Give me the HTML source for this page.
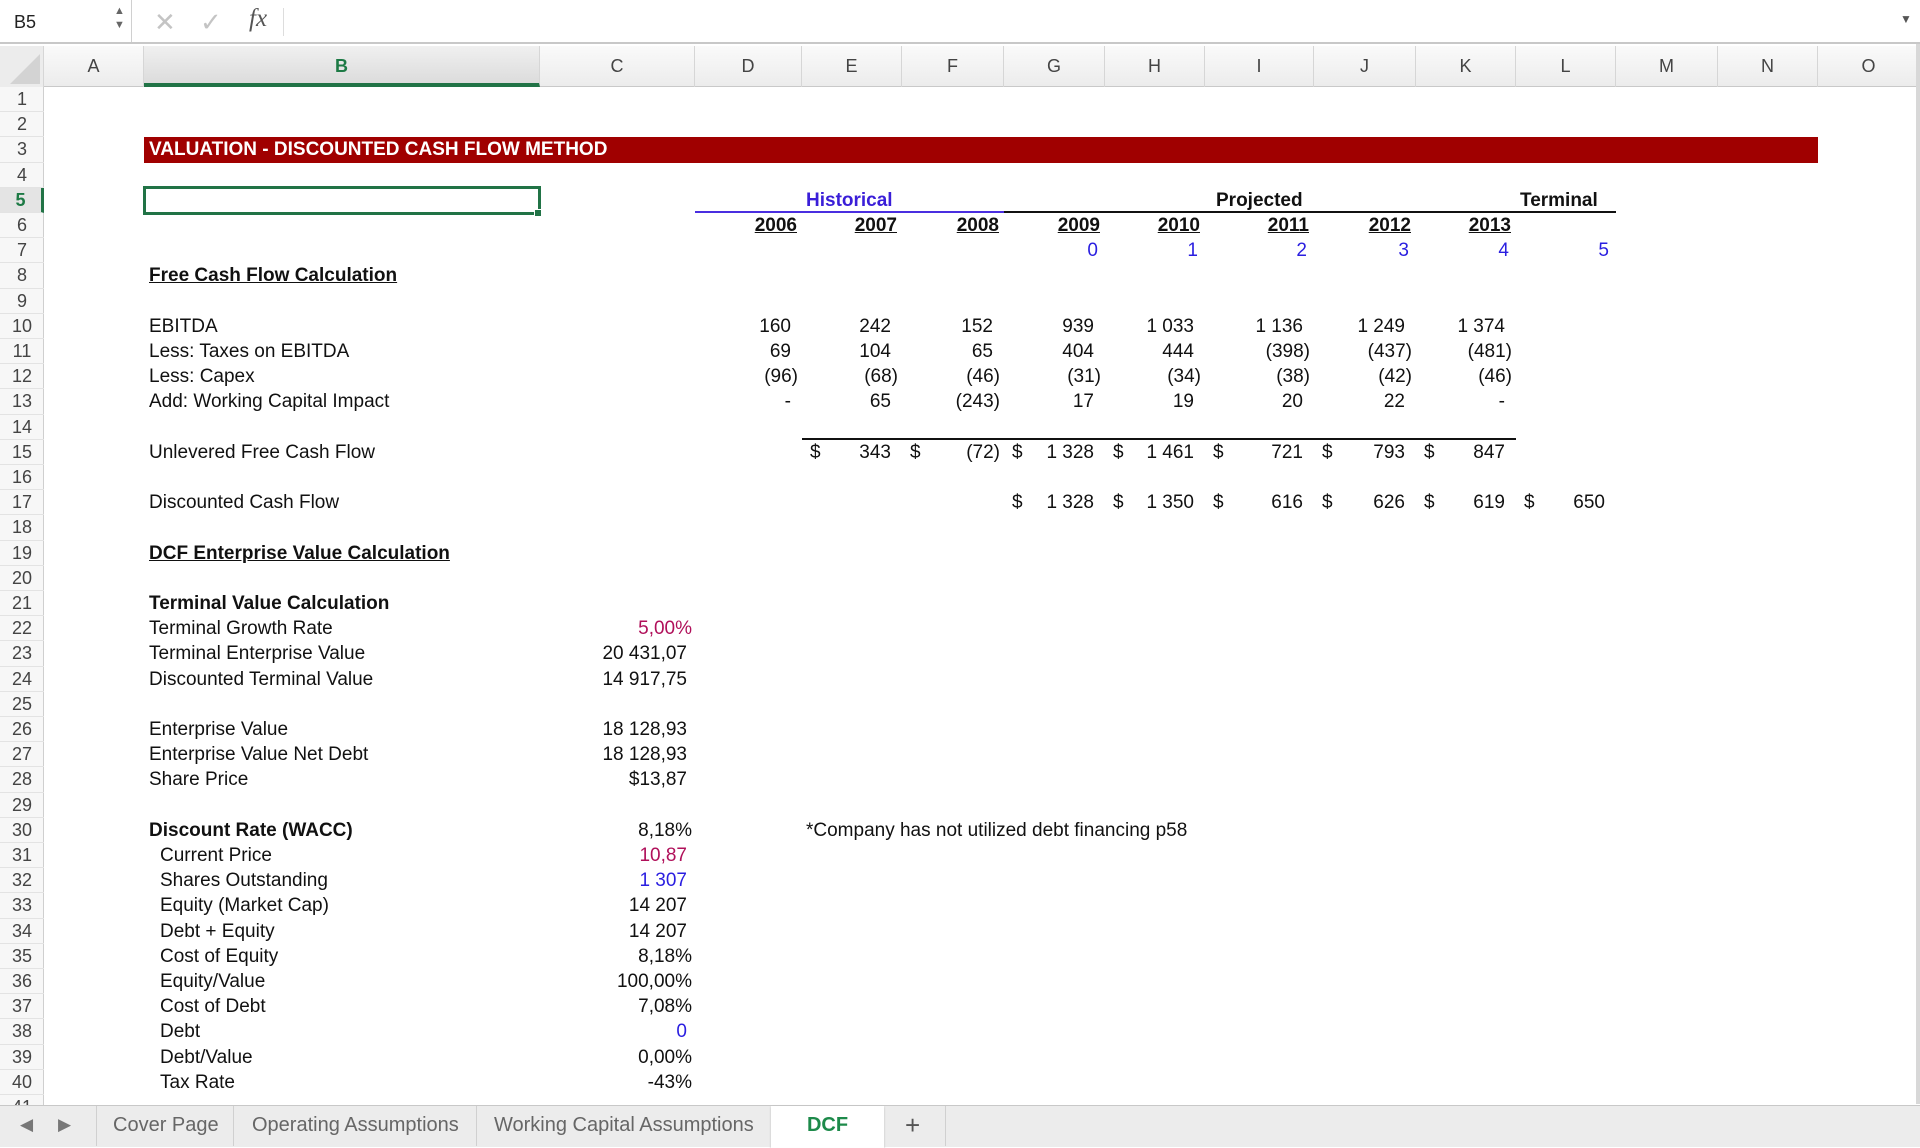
<!DOCTYPE html>
<html><head><meta charset="utf-8"><style>
*{margin:0;padding:0;box-sizing:border-box}
body{width:1920px;height:1147px;overflow:hidden;background:#fff;font-family:"Liberation Sans",Arial,sans-serif;font-size:19px;color:#111;position:relative}
.fb{position:absolute;left:0;top:0;width:1920px;height:44px;background:#fff;border-bottom:2px solid #c8c8c8}
.ch{position:absolute;left:0;top:46px;width:1920px;height:41px;background:linear-gradient(#fafafa,#ececec);border-bottom:1px solid #c9c9c9}
.ch div{position:absolute;top:0;height:41px;line-height:41px;text-align:center;border-right:1px solid #d6d6d6;color:#444;font-size:18px}
.rh{position:absolute;left:0;top:87px;width:44px;height:1020px;background:#f7f7f7;border-right:1px solid #cfcfcf}
.rh div{position:absolute;left:0;width:44px;height:25.2px;line-height:25px;text-align:center;border-bottom:1px solid #e3e3e3;color:#444;font-size:18px}
.r{position:absolute;left:0;width:1920px;height:25.2px}
.r div{position:absolute;top:0;height:25.2px;line-height:25px;white-space:nowrap}
.b{left:149px}.bi{left:160px}
.c{left:540px;width:155px;text-align:right;padding-right:3px}
.D{left:695px;width:107px}.E{left:802px;width:100px}.F{left:902px;width:102px}.G{left:1004px;width:101px}.H{left:1105px;width:100px}.I{left:1205px;width:109px}.J{left:1314px;width:102px}.K{left:1416px;width:100px}.L{left:1516px;width:100px}
.n{text-align:right;padding-right:11px}.p{text-align:right;padding-right:4px}
.y{text-align:right;padding-right:5px;font-weight:bold;text-decoration:underline}
.z{text-align:right;padding-right:7px;color:#2a1ee0}
.dl{text-align:left;padding-left:8px}
.bold{font-weight:bold}.u{text-decoration:underline}
.red{color:#b0105a}.blue{color:#2a1ee0}
.tabs{position:absolute;left:0;top:1105px;width:1920px;height:42px;background:#ececec;border-top:1px solid #c8c8c8}
.tabs div{position:absolute;top:0;height:40px;line-height:38px;font-size:20px;color:#666}
.sep{width:1px;background:#d0d0d0;height:40px!important}
</style></head><body>
<div class="fb">
 <div style="position:absolute;left:0;top:0;width:132px;height:42px;border-right:1px solid #d0d0d0"></div>
 <div style="position:absolute;left:14px;top:12px;font-size:18px;color:#222">B5</div>
 <div style="position:absolute;left:114px;top:4px;font-size:11px;color:#666;line-height:14px">▲<br>▼</div>
 <div style="position:absolute;left:154px;top:7px;font-size:26px;color:#c4c4c4">✕</div>
 <div style="position:absolute;left:200px;top:7px;font-size:26px;color:#c4c4c4">✓</div>
 <div style="position:absolute;left:249px;top:5px;font-size:25px;font-style:italic;font-family:'Liberation Serif',serif;color:#555">fx</div>
 <div style="position:absolute;left:283px;top:8px;width:1px;height:28px;background:#ddd"></div>
 <div style="position:absolute;left:1900px;top:12px;font-size:12px;color:#555">▼</div>
</div>
<div class="ch">
 <div style="left:0;width:44px;background:#ececec"><span style="position:absolute;left:10px;top:8px;width:0;height:0;border-left:30px solid transparent;border-bottom:30px solid #d3d3d3"></span></div>
 <div style="left:44px;width:100px">A</div>
 <div style="left:144px;width:396px;color:#1d7a45;font-weight:bold;background:linear-gradient(#f0f0f0,#dcdcdc);border-bottom:4px solid #217346">B</div>
 <div style="left:540px;width:155px">C</div>
 <div style="left:695px;width:107px">D</div>
 <div style="left:802px;width:100px">E</div>
 <div style="left:902px;width:102px">F</div>
 <div style="left:1004px;width:101px">G</div>
 <div style="left:1105px;width:100px">H</div>
 <div style="left:1205px;width:109px">I</div>
 <div style="left:1314px;width:102px">J</div>
 <div style="left:1416px;width:100px">K</div>
 <div style="left:1516px;width:100px">L</div>
 <div style="left:1616px;width:102px">M</div>
 <div style="left:1718px;width:100px">N</div>
 <div style="left:1818px;width:102px">O</div>
</div>
<div class="rh">
<div style="top:0">1</div><div style="top:25.2px">2</div><div style="top:50.4px">3</div><div style="top:75.6px">4</div><div style="top:100.8px;color:#1d7a45;font-weight:bold;background:#e4e4e4;border-right:3px solid #217346">5</div><div style="top:126px">6</div><div style="top:151.2px">7</div><div style="top:176.4px">8</div><div style="top:201.6px">9</div><div style="top:226.8px">10</div><div style="top:252px">11</div><div style="top:277.2px">12</div><div style="top:302.4px">13</div><div style="top:327.6px">14</div><div style="top:352.8px">15</div><div style="top:378px">16</div><div style="top:403.2px">17</div><div style="top:428.4px">18</div><div style="top:453.6px">19</div><div style="top:478.8px">20</div><div style="top:504px">21</div><div style="top:529.2px">22</div><div style="top:554.4px">23</div><div style="top:579.6px">24</div><div style="top:604.8px">25</div><div style="top:630px">26</div><div style="top:655.2px">27</div><div style="top:680.4px">28</div><div style="top:705.6px">29</div><div style="top:730.8px">30</div><div style="top:756px">31</div><div style="top:781.2px">32</div><div style="top:806.4px">33</div><div style="top:831.6px">34</div><div style="top:856.8px">35</div><div style="top:882px">36</div><div style="top:907.2px">37</div><div style="top:932.4px">38</div><div style="top:957.6px">39</div><div style="top:982.8px">40</div><div style="top:1008px">41</div>
</div>

<div style="position:absolute;left:144px;top:137px;width:1674px;height:26px;background:#a00000"></div>
<div style="position:absolute;left:149px;top:137px;line-height:26px;color:#fff;font-weight:bold;font-size:19px">VALUATION - DISCOUNTED CASH FLOW METHOD</div>
<div style="position:absolute;left:143px;top:186px;width:398px;height:29px;border:3px solid #217346"></div>
<div style="position:absolute;left:534px;top:209px;width:8px;height:8px;background:#217346;border:1px solid #fff"></div>

<div style="position:absolute;left:695px;top:211px;width:309px;height:2px;background:#4a2ee0"></div>
<div style="position:absolute;left:1004px;top:211px;width:612px;height:2px;background:#111"></div>
<div style="position:absolute;left:802px;top:438px;width:714px;height:2px;background:#111"></div>

<div class="r" style="top:187.8px"><div class="bold" style="left:806px;color:#3a1ed8">Historical</div><div class="bold" style="left:1216px">Projected</div><div class="bold" style="left:1520px">Terminal</div></div>
<div class="r" style="top:213px"><div class="D y">2006</div><div class="E y">2007</div><div class="F y">2008</div><div class="G y">2009</div><div class="H y">2010</div><div class="I y">2011</div><div class="J y">2012</div><div class="K y">2013</div></div>
<div class="r" style="top:238.2px"><div class="G z">0</div><div class="H z">1</div><div class="I z">2</div><div class="J z">3</div><div class="K z">4</div><div class="L z">5</div></div>
<div class="r" style="top:263.4px"><div class="b bold u">Free Cash Flow Calculation</div></div>
<div class="r" style="top:313.8px"><div class="b">EBITDA</div><div class="D n">160</div><div class="E n">242</div><div class="F n">152</div><div class="G n">939</div><div class="H n">1 033</div><div class="I n">1 136</div><div class="J n">1 249</div><div class="K n">1 374</div></div>
<div class="r" style="top:339px"><div class="b">Less: Taxes on EBITDA</div><div class="D n">69</div><div class="E n">104</div><div class="F n">65</div><div class="G n">404</div><div class="H n">444</div><div class="I p">(398)</div><div class="J p">(437)</div><div class="K p">(481)</div></div>
<div class="r" style="top:364.2px"><div class="b">Less: Capex</div><div class="D p">(96)</div><div class="E p">(68)</div><div class="F p">(46)</div><div class="G p">(31)</div><div class="H p">(34)</div><div class="I p">(38)</div><div class="J p">(42)</div><div class="K p">(46)</div></div>
<div class="r" style="top:389.4px"><div class="b">Add: Working Capital Impact</div><div class="D n">-</div><div class="E n">65</div><div class="F p">(243)</div><div class="G n">17</div><div class="H n">19</div><div class="I n">20</div><div class="J n">22</div><div class="K n">-</div></div>
<div class="r" style="top:439.8px"><div class="b">Unlevered Free Cash Flow</div>
<div class="E dl">$</div><div class="E n">343</div><div class="F dl">$</div><div class="F p">(72)</div><div class="G dl">$</div><div class="G n">1 328</div><div class="H dl">$</div><div class="H n">1 461</div><div class="I dl">$</div><div class="I n">721</div><div class="J dl">$</div><div class="J n">793</div><div class="K dl">$</div><div class="K n">847</div></div>
<div class="r" style="top:490.2px"><div class="b">Discounted Cash Flow</div>
<div class="G dl">$</div><div class="G n">1 328</div><div class="H dl">$</div><div class="H n">1 350</div><div class="I dl">$</div><div class="I n">616</div><div class="J dl">$</div><div class="J n">626</div><div class="K dl">$</div><div class="K n">619</div><div class="L dl">$</div><div class="L n">650</div></div>
<div class="r" style="top:540.6px"><div class="b bold u">DCF Enterprise Value Calculation</div></div>
<div class="r" style="top:591px"><div class="b bold">Terminal Value Calculation</div></div>
<div class="r" style="top:616.2px"><div class="b">Terminal Growth Rate</div><div class="c red">5,00%</div></div>
<div class="r" style="top:641.4px"><div class="b">Terminal Enterprise Value</div><div class="c" style="padding-right:8px">20 431,07</div></div>
<div class="r" style="top:666.6px"><div class="b">Discounted Terminal Value</div><div class="c" style="padding-right:8px">14 917,75</div></div>
<div class="r" style="top:717px"><div class="b">Enterprise Value</div><div class="c" style="padding-right:8px">18 128,93</div></div>
<div class="r" style="top:742.2px"><div class="b">Enterprise Value Net Debt</div><div class="c" style="padding-right:8px">18 128,93</div></div>
<div class="r" style="top:767.4px"><div class="b">Share Price</div><div class="c" style="padding-right:8px">$13,87</div></div>
<div class="r" style="top:817.8px"><div class="b bold">Discount Rate (WACC)</div><div class="c">8,18%</div><div style="left:806px">*Company has not utilized debt financing p58</div></div>
<div class="r" style="top:843px"><div class="bi">Current Price</div><div class="c red" style="padding-right:8px">10,87</div></div>
<div class="r" style="top:868.2px"><div class="bi">Shares Outstanding</div><div class="c blue" style="padding-right:8px">1 307</div></div>
<div class="r" style="top:893.4px"><div class="bi">Equity (Market Cap)</div><div class="c" style="padding-right:8px">14 207</div></div>
<div class="r" style="top:918.6px"><div class="bi">Debt + Equity</div><div class="c" style="padding-right:8px">14 207</div></div>
<div class="r" style="top:943.8px"><div class="bi">Cost of Equity</div><div class="c">8,18%</div></div>
<div class="r" style="top:969px"><div class="bi">Equity/Value</div><div class="c">100,00%</div></div>
<div class="r" style="top:994.2px"><div class="bi">Cost of Debt</div><div class="c">7,08%</div></div>
<div class="r" style="top:1019.4px"><div class="bi">Debt</div><div class="c blue" style="padding-right:8px">0</div></div>
<div class="r" style="top:1044.6px"><div class="bi">Debt/Value</div><div class="c">0,00%</div></div>
<div class="r" style="top:1069.8px"><div class="bi">Tax Rate</div><div class="c">-43%</div></div>

<div style="position:absolute;left:1916px;top:44px;width:4px;height:1060px;background:#d8d8d8"></div>
<div class="tabs">
 <div style="left:20px;color:#777;font-size:17px">◀</div>
 <div style="left:58px;color:#777;font-size:17px">▶</div>
 <div class="sep" style="left:96px"></div>
 <div style="left:113px">Cover Page</div>
 <div class="sep" style="left:233px"></div>
 <div style="left:252px">Operating Assumptions</div>
 <div class="sep" style="left:476px"></div>
 <div style="left:494px">Working Capital Assumptions</div>
 <div style="left:771px;width:113px;height:42px;background:#fff;text-align:center;color:#1d8a4a;font-weight:bold;box-shadow:0 1px 2px #bbb">DCF</div>
 <div style="left:905px;font-size:26px;color:#555">+</div>
 <div class="sep" style="left:945px"></div>
</div>
</body></html>
